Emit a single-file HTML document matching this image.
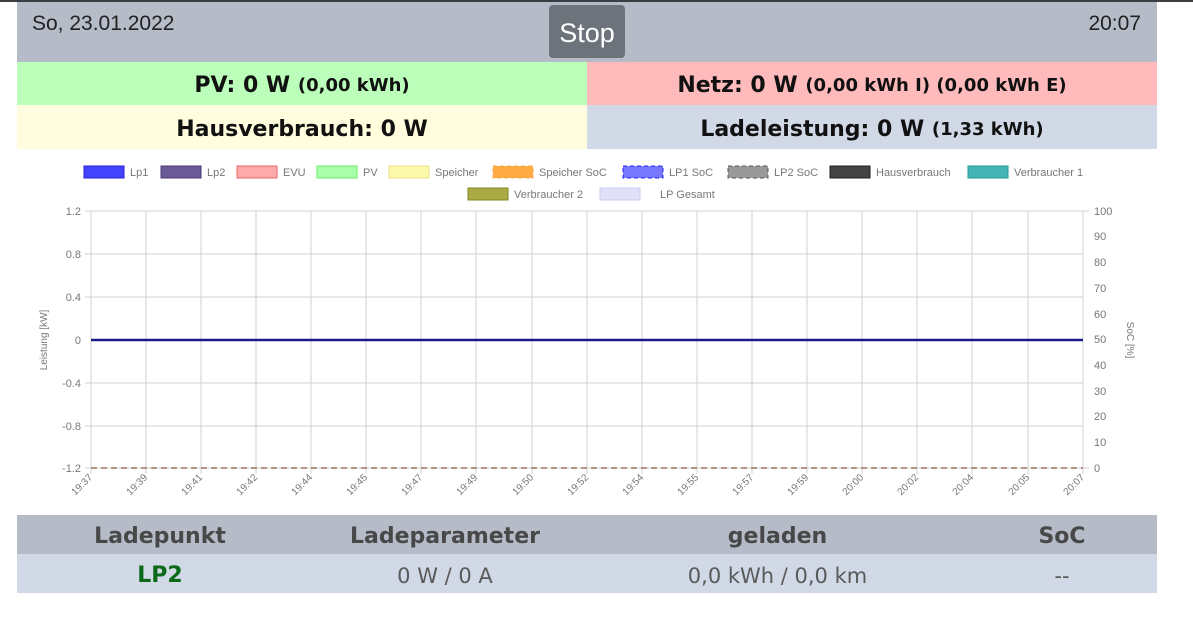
<!DOCTYPE html>
<html><head><meta charset="utf-8"><style>
*{margin:0;padding:0;box-sizing:border-box}
body{width:1193px;height:640px;background:#fff;font-family:"Liberation Sans",sans-serif;position:relative;overflow:hidden}
.top{position:absolute;left:0;top:0;width:1193px;height:2px;background:#3a3d42}
.box{position:absolute;display:flex;align-items:center;justify-content:center}
.b{font-family:"DejaVu Sans",sans-serif;font-weight:bold;font-size:22px;color:#111;padding-top:4px}
.b small{font-size:18px}
.th{font-family:"DejaVu Sans",sans-serif;font-weight:bold;font-size:22px;color:#484848;padding-top:3px}
.td{font-family:"DejaVu Sans",sans-serif;font-size:21px;color:#5a5a5a;padding-top:4px}
</style></head><body>
<div class="top"></div>
<div class="box" style="left:17px;top:2px;width:1140px;height:60px;background:#b5bbc7"></div>
<div style="position:absolute;left:32px;top:12px;font-size:21px;color:#222">So, 23.01.2022</div>
<div style="position:absolute;right:52px;top:12px;font-size:21px;color:#222">20:07</div>
<div class="box" style="left:549px;top:5px;width:76px;height:53px;background:#6c737b;border-radius:4px;color:#fff;font-size:27px;padding-top:4px">Stop</div>
<div class="box b" style="left:17px;top:62px;width:570px;height:43px;background:#bbffbb">PV: 0 W&nbsp;<small>(0,00 kWh)</small></div>
<div class="box b" style="left:587px;top:62px;width:570px;height:43px;background:#ffbbbb">Netz: 0 W&nbsp;<small>(0,00 kWh I) (0,00 kWh E)</small></div>
<div class="box b" style="left:17px;top:105px;width:570px;height:44px;background:#fffddd">Hausverbrauch: 0 W</div>
<div class="box b" style="left:587px;top:105px;width:570px;height:44px;background:#d1d8e6">Ladeleistung: 0 W&nbsp;<small>(1,33 kWh)</small></div>

<svg style="position:absolute;left:0;top:0" width="1193" height="640" font-family="Liberation Sans, sans-serif" font-size="11" fill="#777">
<g font-size="11">
<rect x="84" y="166" width="40" height="12" fill="#4444ff" stroke="#2222dd"/><text x="130" y="176">Lp1</text>
<rect x="161" y="166" width="40" height="12" fill="#6a5a96" stroke="#4a3a76"/><text x="207" y="176">Lp2</text>
<rect x="237" y="166" width="40" height="12" fill="#ffaaaa" stroke="#ee6666"/><text x="283" y="176">EVU</text>
<rect x="317" y="166" width="40" height="12" fill="#aaffaa" stroke="#66ee66"/><text x="363" y="176">PV</text>
<rect x="389" y="166" width="40" height="12" fill="#fafaaa" stroke="#eedd88"/><text x="435" y="176">Speicher</text>
<rect x="493" y="166" width="40" height="12" fill="#ffaa44" stroke="#ffaa44" stroke-dasharray="4,3"/><text x="539" y="176">Speicher SoC</text>
<rect x="623" y="166" width="40" height="12" fill="#7777ff" stroke="#2222ff" stroke-dasharray="4,3"/><text x="669" y="176">LP1 SoC</text>
<rect x="728" y="166" width="40" height="12" fill="#999" stroke="#555" stroke-dasharray="4,3"/><text x="774" y="176">LP2 SoC</text>
<rect x="830" y="166" width="40" height="12" fill="#444" stroke="#222"/><text x="876" y="176">Hausverbrauch</text>
<rect x="968" y="166" width="40" height="12" fill="#44b3b3" stroke="#229999"/><text x="1014" y="176">Verbraucher 1</text>
<rect x="468" y="188" width="40" height="12" fill="#aaaa44" stroke="#888822"/><text x="514" y="198">Verbraucher 2</text>
<rect x="600" y="188" width="40" height="12" fill="#e0e0f8" stroke="#ccccee"/><text x="660" y="198">LP Gesamt</text>
</g>
<g stroke="#d0d0d0" stroke-width="1">
<line x1="85" y1="211" x2="1089" y2="211"/><line x1="85" y1="254" x2="1083" y2="254"/><line x1="85" y1="297" x2="1083" y2="297"/><line x1="85" y1="383" x2="1083" y2="383"/><line x1="85" y1="426" x2="1083" y2="426"/><line x1="85" y1="468" x2="1089" y2="468"/>
<line x1="91" y1="211" x2="91" y2="474"/><line x1="146" y1="211" x2="146" y2="474"/><line x1="201" y1="211" x2="201" y2="474"/><line x1="256" y1="211" x2="256" y2="474"/><line x1="311" y1="211" x2="311" y2="474"/><line x1="366" y1="211" x2="366" y2="474"/><line x1="421" y1="211" x2="421" y2="474"/><line x1="476" y1="211" x2="476" y2="474"/><line x1="532" y1="211" x2="532" y2="474"/><line x1="587" y1="211" x2="587" y2="474"/><line x1="642" y1="211" x2="642" y2="474"/><line x1="697" y1="211" x2="697" y2="474"/><line x1="752" y1="211" x2="752" y2="474"/><line x1="807" y1="211" x2="807" y2="474"/><line x1="862" y1="211" x2="862" y2="474"/><line x1="917" y1="211" x2="917" y2="474"/><line x1="972" y1="211" x2="972" y2="474"/><line x1="1028" y1="211" x2="1028" y2="474"/><line x1="1083" y1="211" x2="1083" y2="474"/>
</g>
<line x1="91" y1="340" x2="1083" y2="340" stroke="#1a1a8a" stroke-width="2.5"/>
<line x1="91" y1="468" x2="1083" y2="468" stroke="#a07060" stroke-width="1.5" stroke-dasharray="6,4"/>
<g text-anchor="end">
<text x="81" y="215">1.2</text><text x="81" y="258">0.8</text><text x="81" y="301">0.4</text><text x="81" y="344">0</text><text x="81" y="387">-0.4</text><text x="81" y="430">-0.8</text><text x="81" y="472">-1.2</text>
</g>
<g>
<text x="1094" y="215">100</text><text x="1094" y="240">90</text><text x="1094" y="266">80</text><text x="1094" y="292">70</text><text x="1094" y="318">60</text><text x="1094" y="343">50</text><text x="1094" y="369">40</text><text x="1094" y="395">30</text><text x="1094" y="420">20</text><text x="1094" y="446">10</text><text x="1094" y="472">0</text>
</g>
<text transform="translate(47,340) rotate(-90)" text-anchor="middle" font-size="10">Leistung [kW]</text>
<text transform="translate(1127,340) rotate(90)" text-anchor="middle" font-size="10">SoC [%]</text>
<g text-anchor="end" font-size="10">
<text transform="translate(93,478) rotate(-45)">19:37</text><text transform="translate(148,478) rotate(-45)">19:39</text><text transform="translate(203,478) rotate(-45)">19:41</text><text transform="translate(258,478) rotate(-45)">19:42</text><text transform="translate(313,478) rotate(-45)">19:44</text><text transform="translate(368,478) rotate(-45)">19:45</text><text transform="translate(423,478) rotate(-45)">19:47</text><text transform="translate(478,478) rotate(-45)">19:49</text><text transform="translate(534,478) rotate(-45)">19:50</text><text transform="translate(589,478) rotate(-45)">19:52</text><text transform="translate(644,478) rotate(-45)">19:54</text><text transform="translate(699,478) rotate(-45)">19:55</text><text transform="translate(754,478) rotate(-45)">19:57</text><text transform="translate(809,478) rotate(-45)">19:59</text><text transform="translate(864,478) rotate(-45)">20:00</text><text transform="translate(919,478) rotate(-45)">20:02</text><text transform="translate(974,478) rotate(-45)">20:04</text><text transform="translate(1030,478) rotate(-45)">20:05</text><text transform="translate(1085,478) rotate(-45)">20:07</text>
</g>
</svg>

<div style="position:absolute;left:17px;top:515px;width:1140px;height:39px;background:#b5bbc7"></div>
<div style="position:absolute;left:17px;top:554px;width:1140px;height:39px;background:#d1d8e6"></div>
<div class="box th" style="left:60px;top:515px;width:200px;height:39px">Ladepunkt</div>
<div class="box th" style="left:315px;top:515px;width:260px;height:39px">Ladeparameter</div>
<div class="box th" style="left:660px;top:515px;width:235px;height:39px">geladen</div>
<div class="box th" style="left:1000px;top:515px;width:124px;height:39px">SoC</div>
<div class="box th" style="left:60px;top:554px;width:200px;height:39px;color:#0a6a1a;padding-top:4px">LP2</div>
<div class="box td" style="left:315px;top:554px;width:260px;height:39px">0 W / 0 A</div>
<div class="box td" style="left:660px;top:554px;width:235px;height:39px">0,0 kWh / 0,0 km</div>
<div class="box td" style="left:1000px;top:554px;width:124px;height:39px">--</div>
</body></html>
